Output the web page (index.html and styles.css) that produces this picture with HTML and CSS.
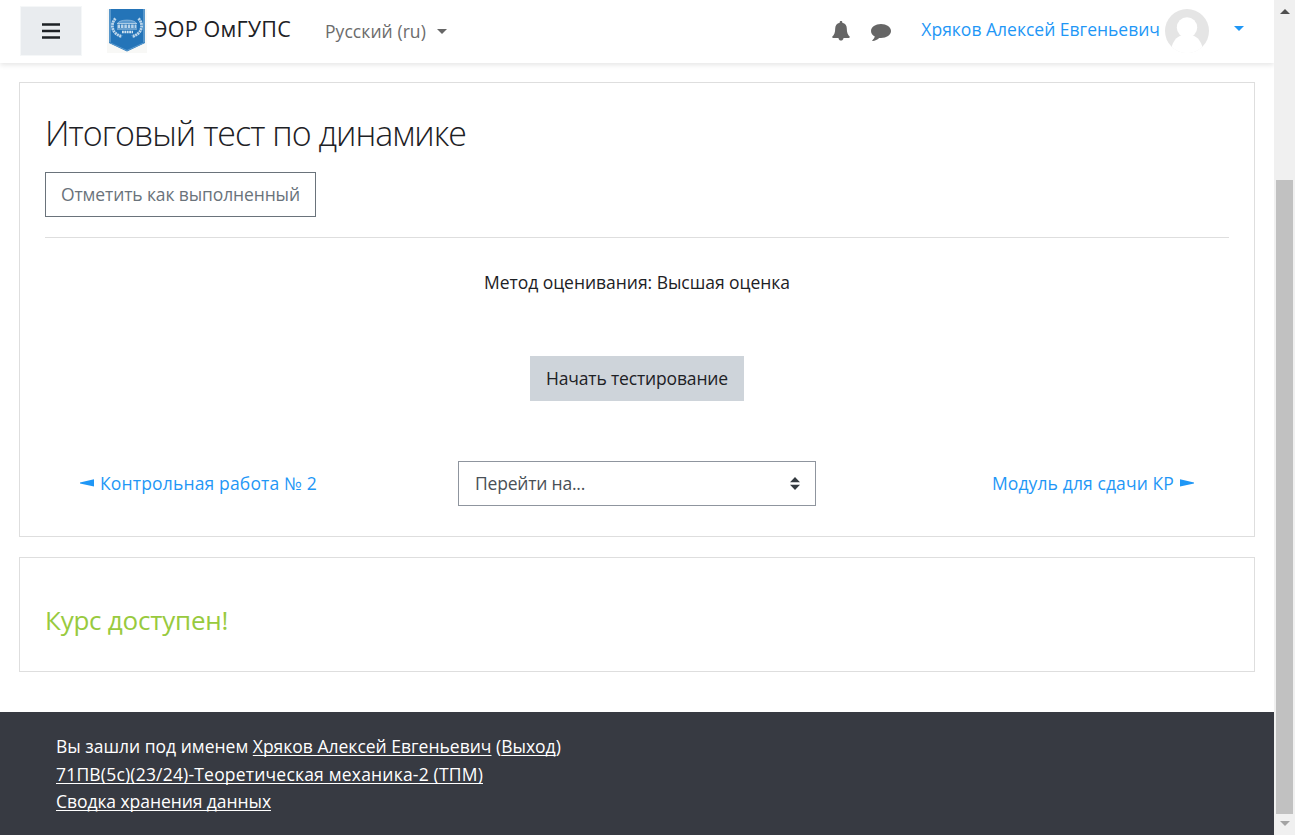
FILE: index.html
```
<!DOCTYPE html>
<html lang="ru">
<head>
<meta charset="utf-8">
<title>Итоговый тест по динамике</title>
<link rel="stylesheet" href="styles.css">
</head>
<body>
<div class="window">
  <div class="page">
    <header class="navbar">
      <button class="menu-toggle" aria-label="Меню">
        <svg width="18" height="16" viewBox="0 0 18 16"><path d="M0 1.500h18M0 8h18M0 14.500h18" stroke="#1d2125" stroke-width="2.600"/></svg>
      </button>
      <a class="brand">
        <svg class="crest" width="40" height="44" viewBox="0 0 40 44">
          <path d="M0 0h40v44H0z" fill="#f8f8f6"/>
          <path d="M2 0h36v34L20 42.500 2 34z" fill="#2474b8"/>
          <path d="M3 0v33M37 0v33" stroke="#6aa3d1" stroke-width="1.500"/>
          <path d="M2.500 33.500 20 41.500l17.500-8" fill="none" stroke="#5b9bcf" stroke-width="1"/>
          <path d="M8.500 9.500C3 15 4.500 25 15 27.500M31.500 9.500C37 15 35.500 25 25 27.500" fill="none" stroke="#bcd6eb" stroke-width="2.800" stroke-dasharray="2 .6"/>
          <path d="M10.500 14.500C12 10 28 10 29.500 14.500z" fill="#5c9bd0" stroke="#a5c9e5" stroke-width=".7"/>
          <path d="M10 14.500h20M10 20h20" stroke="#a9cbe5" stroke-width="1"/>
          <path d="M10.500 17.300h19" stroke="#b8d4ea" stroke-width="3.400" stroke-dasharray="2.600 .8"/>
          <path d="M15 23h11" stroke="#d0e2f0" stroke-width="2.600" stroke-dasharray="1.800 .6"/>
        </svg>
        <span class="t brand-name">ЭОР ОмГУПС</span>
      </a>
      <a class="language"><span class="t t-lang">Русский (ru)</span><i class="caret"></i></a>
      <div class="user-area">
        <svg class="bell" width="18" height="20" viewBox="0 0 18 20"><path d="M9 0c.8 0 1.300.5 1.300 1.300v.5c3 .6 4.500 2.900 4.500 5.700 0 4.300 1 6.500 3 8.200 0 .9-.6 1.300-1.300 1.300h-5c0 1.500-1.100 2.600-2.500 2.600s-2.500-1.100-2.500-2.600h-5C.7 17 .2 16.500.2 15.700c2-1.700 3-3.900 3-8.200 0-2.800 1.500-5.100 4.500-5.700v-.5C7.700.5 8.200 0 9 0z" fill="#666"/></svg>
        <svg class="bubble" width="20" height="17" viewBox="0 0 20 17"><path d="M10 0c5.500 0 10 3.100 10 7s-4.500 7-10 7l-1.800-.1C6.300 15.600 4 16.600 1.800 16.900c-.5.100-.7-.4-.4-.7 1.300-1.200 2-2 2.400-3.600C1.500 11.400 0 9.300 0 7c0-3.900 4.500-7 10-7z" fill="#666"/></svg>
        <a class="user-name"><span class="t">Хряков Алексей Евгеньевич</span></a>
        <svg class="avatar" width="44" height="44" viewBox="0 0 44 44">
          <defs><clipPath id="round"><circle cx="22" cy="22" r="22"/></clipPath></defs>
          <g clip-path="url(#round)"><path d="M0 0h44v44H0z" fill="#e5e5e5"/><circle cx="22" cy="18.500" r="10.200" fill="#fff"/><path d="M6.500 38.500c1.500-6 5-10.500 9.500-12h12c4.500 1.500 8 6 9.500 12V44h-31z" fill="#fff"/><path d="M0 38h44v6H0z" fill="#fff"/></g>
        </svg>
        <i class="caret caret-user"></i>
      </div>
    </header>
    <main class="content">
      <section class="card quiz">
        <h2 class="title"><span class="t">Итоговый тест по динамике</span></h2>
        <button class="btn btn-outline"><span class="t t-mark">Отметить как выполненный</span></button>
        <hr class="divider">
        <p class="grading"><span class="t t-grade">Метод оценивания: Высшая оценка</span></p>
        <div class="start"><button class="btn btn-start"><span class="t t-start">Начать тестирование</span></button></div>
        <nav class="activity-nav">
          <a class="link prev"><svg width="14" height="8" viewBox="0 0 14 8"><path d="M0 3.500 14 .2v7.300L0 4.500z" fill="#1f97f6"/></svg><span class="t t-prev">Контрольная работа № 2</span></a>
          <div class="jump"><span class="t t-jump">Перейти на...</span><svg width="10" height="13" viewBox="0 0 10 13"><path d="M5 0l5 5.300H0zM5 13 0 7.700h10z" fill="#343a40"/></svg></div>
          <a class="link next"><span class="t t-next">Модуль для сдачи КР</span><svg width="14" height="8" viewBox="0 0 14 8"><path d="M14 3.500 0 .2v7.300l14-3z" fill="#1f97f6"/></svg></a>
        </nav>
      </section>
      <section class="card notice"><h3 class="available"><span class="t">Курс доступен!</span></h3></section>
    </main>
    <footer class="footer">
      <div><span class="t">Вы зашли под именем</span> <a class="t">Хряков Алексей Евгеньевич</a> <span class="t">(<a>Выход</a>)</span></div>
      <div><a class="t t-course">71ПВ(5с)(23/24)-Теоретическая механика-2 (ТПМ)</a></div>
      <div><a class="t t-summary">Сводка хранения данных</a></div>
    </footer>
  </div>
  <div class="scrollbar"><i class="arrow arrow-up"></i><i class="thumb"></i><i class="arrow arrow-down"></i></div>
</div>
</body>
</html>
```
FILE: styles.css
```
* { box-sizing: border-box; }
body { margin: 0; font: 17.5px/27.5px "Open Sans", "Noto Sans", sans-serif; color: #1d2125; background: #fff; overflow: hidden; }
button { font: inherit; border: 0; border-radius: 0; padding: 0; margin: 0; color: inherit; }
svg { display: block; flex: none; }
.t { white-space: nowrap; }
.t-lang { letter-spacing: .07px; }
.t-mark { letter-spacing: -.12px; }
.t-grade { letter-spacing: -.03px; }
.t-start { letter-spacing: -.15px; padding-top: 1px; }
.t-prev { letter-spacing: .165px; }
.t-next { letter-spacing: .11px; }
.t-jump { letter-spacing: -.2px; }
.t-course { letter-spacing: .195px; }
.t-summary { letter-spacing: -.065px; }
.window { display: flex; width: 1295px; height: 835px; }
.page { width: 1274px; display: flex; flex-direction: column; }
.navbar { height: 63px; flex: none; display: flex; align-items: flex-start; padding-left: 20px; background: #fff; box-shadow: 0 2px 5px rgba(0,0,0,.1); }
.menu-toggle { width: 62px; height: 50px; margin-top: 6px; display: grid; place-items: center; background: #e9ecef; border: 1px solid #f5f7f8; }
.brand { display: flex; margin-left: 25px; }
.crest { margin-top: 9px; }
.brand-name { font-size: 21.5px; line-height: 30px; letter-spacing: .2px; margin: 14px 0 0 7px; }
.language { display: flex; align-items: center; gap: 11px; margin: 18px 0 0 34px; color: #6c6c6c; }
.caret { border: 5px solid transparent; border-top-color: #666; border-bottom: 0; }
.user-area { display: flex; margin-left: auto; padding-right: 30px; }
.bell { margin-top: 21px; }
.bubble { margin: 24px 0 0 21px; }
.user-name { margin: 16px 0 0 30px; color: #1f97f6; }
.avatar { margin: 9px 0 0 5px; }
.caret-user { margin: 26px 0 0 25px; border-top-color: #1f97f6; }
.content { padding: 19px 19px 0; display: flex; flex-direction: column; gap: 20px; flex: 1; }
.card { border: 1px solid #dedede; padding: 0 25px; }
.quiz { height: 455px; }
.title { margin: 28px 0 0; font-size: 34px; line-height: 44px; font-weight: 300; letter-spacing: -.98px; }
.btn { height: 45px; padding: 0 16px; display: flex; align-items: center; }
.btn-outline { margin-top: 17px; border: 1px solid #6a737b; color: #6a737b; background: #fff; padding: 0 15px; }
.divider { border: 0; border-top: 1px solid #dedede; margin: 20px 0 0; }
.grading { margin: 31px 0 0; text-align: center; }
.start { display: flex; justify-content: center; margin-top: 59px; }
.btn-start { background: #ced4da; }
.activity-nav { display: grid; grid-template-columns: 1fr 358px 1fr; align-items: center; margin: 60px 35px 0; }
.link { display: flex; align-items: center; gap: 6px; color: #1f97f6; }
.link .t, .jump .t { padding-top: 2px; }
.next { justify-content: flex-end; }
.jump { height: 45px; border: 1px solid #8f959e; padding: 0 15px 0 16px; display: flex; align-items: center; justify-content: space-between; color: #495057; }
.notice { height: 115px; }
.available { margin: 45px 0 0; color: #98ca3e; font-size: 26px; line-height: 34px; font-weight: 400; letter-spacing: -.23px; }
.footer { height: 123px; flex: none; background: #373a42; color: #fff; padding: 21px 56px 19px; }
.footer a { text-decoration: underline; text-underline-offset: 2px; text-decoration-thickness: 1px; text-decoration-skip-ink: none; }
.scrollbar { width: 21px; background: #f0f0f0; display: flex; flex-direction: column; align-items: center; }
.arrow { border: 5px solid transparent; }
.arrow-up { border-top: 0; border-bottom-color: #505050; margin-top: 9px; }
.thumb { width: 17px; height: 634px; margin-top: 166px; background: #c1c1c1; }
.arrow-down { border-bottom: 0; border-top-color: #a3a3a3; margin-top: 7px; }
```
